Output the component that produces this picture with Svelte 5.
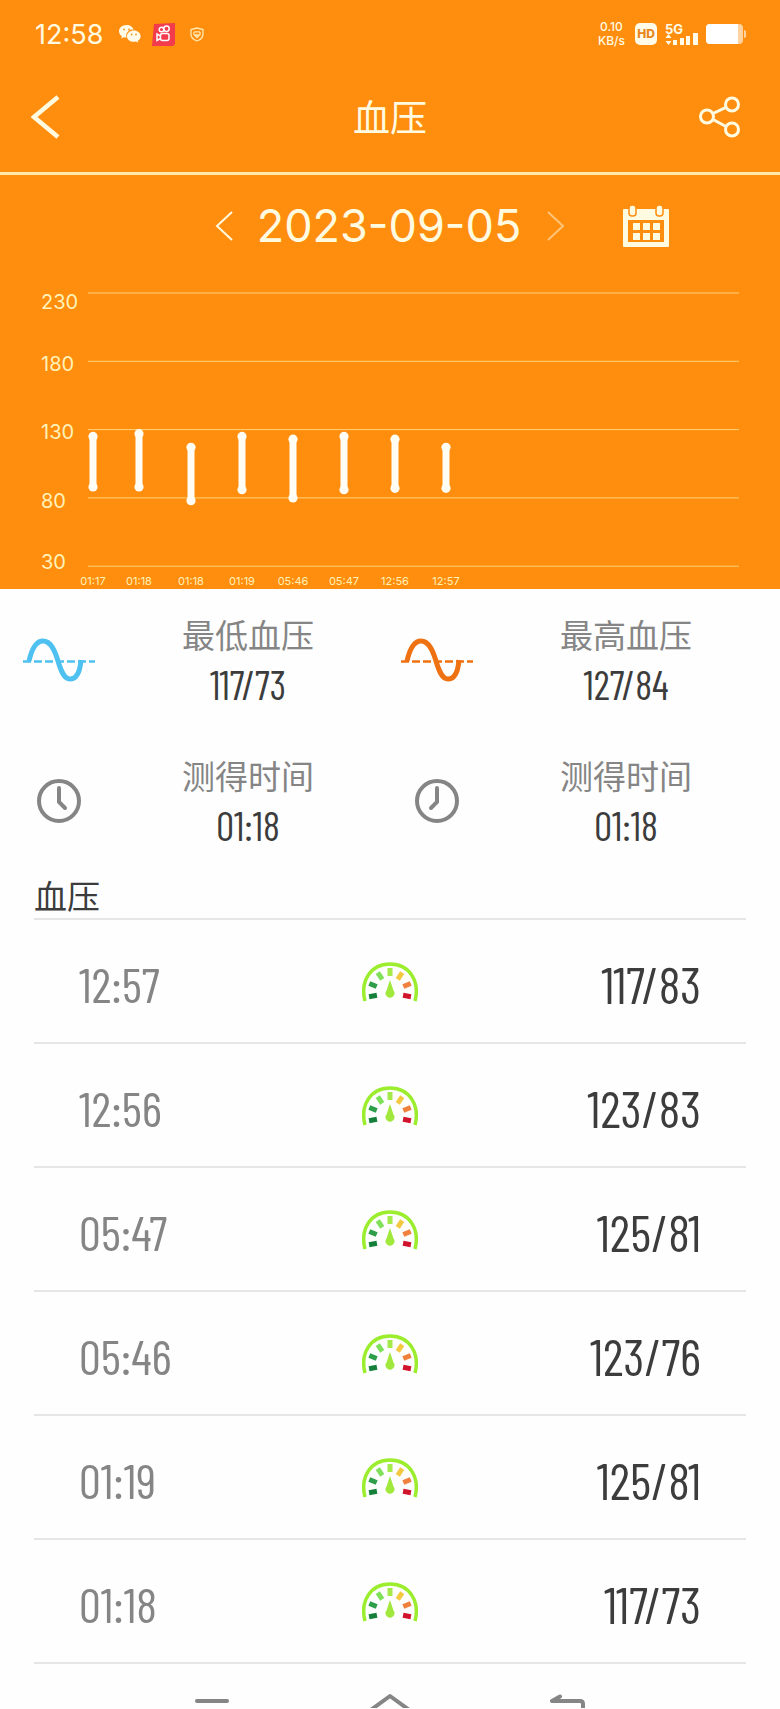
<script lang="ts">
  const readings = [
    { time: '01:17', high: 125, low: 88, x: 93 },
    { time: '01:18', high: 127, low: 88, x: 139 },
    { time: '01:18', high: 117, low: 78, x: 191 },
    { time: '01:19', high: 125, low: 86, x: 242 },
    { time: '05:46', high: 123, low: 80, x: 293 },
    { time: '05:47', high: 125, low: 86, x: 344 },
    { time: '12:56', high: 123, low: 87, x: 395 },
    { time: '12:57', high: 117, low: 87, x: 446 }
  ]

  // labelY is the text baseline of each axis label
  const ticks = [
    { value: 230, labelY: 33 },
    { value: 180, labelY: 95 },
    { value: 130, labelY: 163 },
    { value: 80, labelY: 232 },
    { value: 30, labelY: 293 }
  ]

  const stats = [
    { icon: 'wave', color: '#4fc1f0', label: '最低血压', value: '117/73' },
    { icon: 'wave', color: '#ee7112', label: '最高血压', value: '127/84' },
    { icon: 'clock', hands: 'M22 9V23L28 29', label: '测得时间', value: '01:18' },
    { icon: 'clock', hands: 'M22 9V23L16 29', label: '测得时间', value: '01:18' }
  ]

  const records = [
    { time: '12:57', value: '117/83' },
    { time: '12:56', value: '123/83' },
    { time: '05:47', value: '125/81' },
    { time: '05:46', value: '123/76' },
    { time: '01:19', value: '125/81' },
    { time: '01:18', value: '117/73' }
  ]

  const marks = [
    { x: 11, y: 34, angle: -100, color: '#15803a' },
    { x: 11, y: 23, angle: -68, color: '#2f9e4b' },
    { x: 18, y: 14, angle: -34, color: '#7fe05a' },
    { x: 28, y: 10, angle: 0, color: '#a4ea4a' },
    { x: 38, y: 14, angle: 34, color: '#f5c842' },
    { x: 45, y: 23, angle: 68, color: '#f0813c' },
    { x: 45, y: 34, angle: 100, color: '#d0142c' }
  ]

  let date = $state('2023-09-05')

  function scaleY(value: number): number {
    return 17 + (230 - value) * 1.366
  }

  function shiftDate(days: number) {
    const next = new Date(date + 'T00:00:00Z')
    next.setUTCDate(next.getUTCDate() + days)
    date = next.toISOString().slice(0, 10)
  }
</script>

<div class="page">
  <div class="top">
    <div class="status">
      <span class="clock">12:58</span>
      <svg class="wechat" width="22" height="18" viewBox="0 0 22 18">
        <path fill="#fffbe8" d="M7.500 0C3.300 0 0 2.800 0 6.300c0 2 1.100 3.800 2.900 5L2.200 13.600l2.700-1.400c.9.200 1.800.4 2.700.4a6 6 0 0 1 7-7.800C13.900 2 11 0 7.500 0z" />
        <path fill="#fffbe8" d="M14.800 5.600c-3.800 0-6.800 2.500-6.800 5.600s3 5.600 6.800 5.600c.8 0 1.600-.1 2.300-.3l2.200 1.200-.6-1.900c1.800-1 2.900-2.700 2.900-4.600 0-3.100-3-5.600-6.800-5.600z" />
        <g fill="#f09a2a">
          <circle cx="5" cy="4.500" r="1" />
          <circle cx="10" cy="4.500" r="1" />
          <circle cx="12.600" cy="9.500" r=".9" />
          <circle cx="17" cy="9.500" r=".9" />
        </g>
      </svg>
      <svg class="kuaishou" width="23" height="23" viewBox="0 0 23 23">
        <path fill="#f23b4c" d="M2 1 23 0V21L21 23H0z" />
        <g fill="none" stroke="#fff" stroke-width="1.500">
          <circle cx="9.500" cy="6.500" r="2.300" />
          <circle cx="14.500" cy="5.800" r="2.700" />
          <rect x="8.500" y="10.500" width="8.500" height="7" rx="2" />
          <path d="M8.500 13 5 11v6.500L8.500 15.500" />
        </g>
      </svg>
      <svg class="shield" width="14" height="15" viewBox="0 0 14 15">
        <path d="M7 1 13 2.500V7c0 3.500-2.500 5.800-6 7-3.500-1.200-6-3.500-6-7V2.500z" />
        <path d="M4 4.800h6M4 5v2.500L7 10.500l3-3V5M5.500 7.200 7 8.500l1.500-1.300" />
      </svg>
      <span class="speed">
        <span>0.10</span>
        <span>KB/s</span>
      </span>
      <span class="hd">HD</span>
      <svg class="signal" width="34" height="26" viewBox="0 0 34 26">
        <text x="0" y="13">5G</text>
        <path d="M3.500 13 6.500 17H.5zM3.500 24 6.500 20H.5zM8 19h4v5H8zM15 17h4v7h-4zM21 15h4v9h-4zM28 12h5v12h-5z" />
      </svg>
      <svg class="battery" width="40" height="20" viewBox="0 0 40 20">
        <rect width="37" height="20" rx="4" fill="#ffd3a0" />
        <path d="M4 0H32V20H4a4 4 0 0 1-4-4V4a4 4 0 0 1 4-4z" fill="#fff" />
        <path d="M38 6c1.300 0 2 1 2 2v4c0 1-.7 2-2 2z" fill="#ffd3a0" />
      </svg>
    </div>

    <header>
      <button class="back" aria-label="返回">
        <svg width="30" height="46" viewBox="0 0 30 46">
          <path d="M27 3 3 23 27 43" stroke-width="4.500" />
        </svg>
      </button>
      <h1>血压</h1>
      <button class="share" aria-label="分享">
        <svg width="42" height="42" viewBox="0 0 42 42">
          <g stroke-width="3">
            <circle cx="8" cy="20.500" r="6.500" />
            <circle cx="33" cy="8.500" r="6.500" />
            <circle cx="33" cy="33.500" r="6.500" />
            <path d="M14 17.500 27 11.300M14 23.500 27 30.500" />
          </g>
        </svg>
      </button>
    </header>

    <div class="date-row">
      <button class="prev" aria-label="前一天" onclick={() => shiftDate(-1)}>
        <svg width="18" height="30" viewBox="0 0 18 30">
          <path d="M17 1 2 15 17 29" stroke-width="2" />
        </svg>
      </button>
      <time datetime={date}>{date}</time>
      <div class="after">
        <button class="next" aria-label="后一天" onclick={() => shiftDate(1)}>
          <svg width="18" height="30" viewBox="0 0 18 30">
            <path d="M1 1 16 15 1 29" stroke-width="2" />
          </svg>
        </button>
        <button aria-label="日历">
          <svg width="46" height="42" viewBox="0 0 46 42">
            <path fill="#fffbe0" fill-rule="evenodd" stroke="none" d="M0 5Q0 4 1 4H45Q46 4 46 5V41Q46 42 45 42H1Q0 42 0 41zM5 15V37H41V15z" />
            <g fill="#fffbe0" stroke="#ff8d0e" stroke-width="1.500">
              <rect x="6" y="0" width="7" height="11" rx="3" />
              <rect x="33" y="0" width="7" height="11" rx="3" />
            </g>
            <path fill="#fffbe0" stroke="none" d="M10 18h7v7h-7zM20 18h7v7h-7zM30 18h7v7h-7zM10 28h7v7h-7zM20 28h7v7h-7zM30 28h7v7h-7z" />
          </svg>
        </button>
      </div>
    </div>

    <svg class="chart" viewBox="0 0 780 313" role="img" aria-label="血压">
      {#each ticks as tick}
        <line x1="88" x2="739" y1={scaleY(tick.value)} y2={scaleY(tick.value)} />
        <text class="tick" x="41" y={tick.labelY}>{tick.value}</text>
      {/each}
      {#each readings as reading}
        <path class="bar" d="M{reading.x} {scaleY(reading.high)}V{scaleY(reading.low)}" />
        <circle cx={reading.x} cy={scaleY(reading.high)} r="4.600" />
        <circle cx={reading.x} cy={scaleY(reading.low)} r="4.600" />
        <text class="time" x={reading.x} y="309">{reading.time}</text>
      {/each}
    </svg>
  </div>

  <section class="stats">
    {#each stats as stat}
      <div class="stat">
        {#if stat.icon === 'wave'}
          <svg width="72" height="44" viewBox="0 0 72 44" fill="none" stroke={stat.color}>
            <path d="M0 23.500H72" stroke-width="2.500" stroke-dasharray="8 3" />
            <path d="M6 23C9 10 13 3 20 3C28 3 32 13 35 23C38 33 41 41 47 41C53 41 57 34 58 22" stroke-width="5" />
          </svg>
        {:else}
          <svg width="44" height="44" viewBox="0 0 44 44" fill="none" stroke="#858585" stroke-width="4">
            <circle cx="22" cy="22" r="20" />
            <path d={stat.hands} stroke-linecap="round" />
          </svg>
        {/if}
        <div class="stat-text">
          <span class="label">{stat.label}</span>
          <span class="value">{stat.value}</span>
        </div>
      </div>
    {/each}
  </section>

  <section class="records">
    <h2>血压</h2>
    <table>
      <tbody>
        {#each records as record}
          <tr>
            <td class="when">{record.time}</td>
            <td class="gauge">
              <svg width="56" height="42" viewBox="0 0 56 42">
                <path d="M3 39C-2 20 8 2 28 2S58 20 53 39" fill="none" stroke="#9bed2d" stroke-width="3.500" />
                {#each marks as mark}
                  <rect x="-2.500" y="-4" width="5" height="8" fill={mark.color} transform="translate({mark.x} {mark.y}) rotate({mark.angle})" />
                {/each}
                <path d="M28 18 31.500 28.500a4.400 4.400 0 1 1-7 0z" fill="#a0e83c" />
              </svg>
            </td>
            <td class="reading">{record.value}</td>
          </tr>
        {/each}
      </tbody>
    </table>
  </section>

  <nav>
    <button aria-label="菜单">
      <svg width="36" height="16" viewBox="0 0 36 16"><path d="M3 9H33" /></svg>
    </button>
    <button aria-label="主页">
      <svg width="44" height="16" viewBox="0 0 44 16"><path d="M0 20 22 4 44 20" /></svg>
    </button>
    <button aria-label="后退">
      <svg width="36" height="16" viewBox="0 0 36 16"><path d="M10 4.500 2 9H30Q33 9 33 12V20" /></svg>
    </button>
  </nav>
</div>

<style>
:global(body) {
  background: #fefefe;
}

.page {
  color: #3c3c3c;
  font-family: Inter, "Noto Sans CJK SC", sans-serif;
}

.top {
  background: #ff8d0e;
  color: #fffbe0;
}

svg {
  display: block;
  flex: none;
}

button {
  background: none;
  border: 0;
  color: inherit;
  cursor: pointer;
  padding: 0;
}

.status {
  align-items: center;
  box-sizing: border-box;
  display: flex;
  height: 68px;
  padding: 0 34px 0 35px;
}

.clock {
  font-size: 27px;
}

.wechat {
  margin-left: 16px;
}

.kuaishou {
  margin-left: 11px;
}

.shield {
  fill: none;
  margin-left: 15px;
  stroke: #ffe9b0;
  stroke-width: 1.3;
}

.speed {
  display: flex;
  flex-direction: column;
  font-size: 12px;
  font-weight: 500;
  line-height: 14px;
  margin-left: auto;
  text-align: center;
}

.hd {
  background: #fffbe8;
  border-radius: 5px;
  color: #e8861c;
  font-size: 12px;
  font-weight: 800;
  line-height: 22px;
  margin: 0 8px 0 10px;
  text-align: center;
  width: 22px;
}

.signal {
  fill: #fffbe8;
  font-size: 13px;
  font-weight: 700;
}

.battery {
  margin-left: 7px;
}

header {
  align-items: center;
  border-bottom: 3px solid #ffe9a8;
  box-sizing: border-box;
  display: grid;
  grid-template-columns: 1fr auto 1fr;
  height: 107px;
  padding: 0 39px 6px 31px;
}

header svg,
.date-row svg {
  fill: none;
  stroke: #fffbe0;
}

.back {
  justify-self: start;
}

.share {
  justify-self: end;
}

h1 {
  font-size: 37px;
  font-weight: 400;
  line-height: 44px;
  margin: 0;
  padding: 4px 0 0 8px;
}

.date-row {
  align-items: center;
  box-sizing: border-box;
  display: grid;
  grid-template-columns: 1fr auto 1fr;
  height: 101px;
}

.date-row time {
  font-size: 45px;
  line-height: 56px;
  padding: 0 26px 0 24px;
}

.prev {
  justify-self: end;
}

.after {
  align-items: center;
  display: flex;
  gap: 58px;
}

.next {
  opacity: 0.5;
}

.chart {
  height: auto;
  width: 100%;
}

.chart line {
  stroke: #ffd37a;
}

.chart .bar {
  stroke: #fffdf4;
  stroke-width: 7;
}

.chart circle {
  fill: #fffdf4;
}

.chart text {
  fill: #fff2b8;
}

.chart .tick {
  font-size: 20px;
}

.chart .time {
  font-size: 11px;
  text-anchor: middle;
}

.stats {
  display: grid;
  gap: 45px 0;
  grid-template-columns: 1fr 1fr;
  padding: 23px 12px 28px;
}

.stat {
  align-items: center;
  display: grid;
  grid-template-columns: 94px 1fr;
}

.stat svg {
  justify-self: center;
}

.stat-text {
  display: flex;
  flex-direction: column;
  line-height: 48px;
  text-align: center;
}

.label {
  color: #858585;
  font-size: 33px;
}

.value,
.when,
.reading {
  font-family: "Barlow Condensed", "Roboto Condensed", "Liberation Sans Narrow", "Liberation Sans", sans-serif;
}

.value {
  font-size: 40px;
}

.records {
  padding: 0 34px;
}

h2 {
  border-bottom: 2px solid #e6e6e6;
  font-size: 33px;
  font-weight: 400;
  line-height: 41px;
  margin: 0;
}

table {
  border-collapse: separate;
  border-spacing: 0;
  table-layout: fixed;
  width: 100%;
}

td {
  border-bottom: 2px solid #e6e6e6;
  box-sizing: border-box;
  height: 124px;
  padding: 4px 0 0;
  vertical-align: middle;
}

.when {
  color: #858585;
  font-size: 49px;
  padding-left: 45px;
}

.gauge svg {
  margin: 0 auto;
}

.reading {
  font-size: 51px;
  padding-right: 45px;
  text-align: right;
}

nav {
  display: flex;
  justify-content: center;
  gap: 138px;
  padding-top: 28px;
}

nav svg {
  fill: none;
  stroke: #858585;
  stroke-linecap: round;
  stroke-linejoin: round;
  stroke-width: 4;
}
</style>
